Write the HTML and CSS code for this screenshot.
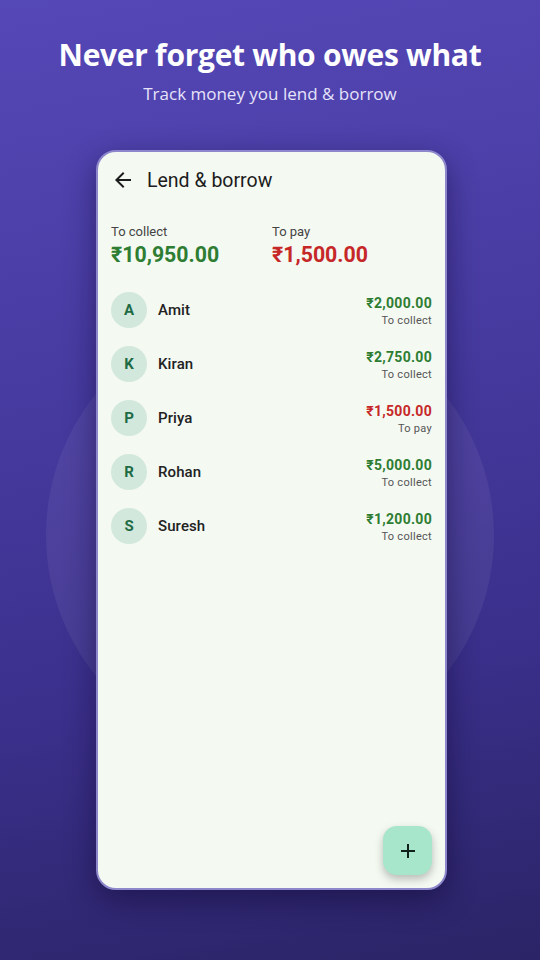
FILE: index.html
```html
<!DOCTYPE html>
<html>
<head>
<meta charset="utf-8">
<link rel="stylesheet" href="styles.css">
</head>
<body>
<div class="screen">
  <div class="glow"></div>
  <header class="hero">
    <h1 class="hero-title">Never forget who owes what</h1>
    <p class="hero-sub">Track money you lend &amp; borrow</p>
  </header>
  <div class="phone">
    <div class="topbar">
      <svg class="back" width="24" height="24" viewBox="0 0 24 24"><path d="M20 11H7.83l5.59-5.59L12 4l-8 8 8 8 1.41-1.41L7.83 13H20v-2z" fill="#1c1c1c"/></svg>
      <span class="topbar-title">Lend &amp; borrow</span>
    </div>
    <div class="totals">
      <div class="total">
        <div class="total-label">To collect</div>
        <div class="total-amt green">₹10,950.00</div>
      </div>
      <div class="total">
        <div class="total-label">To pay</div>
        <div class="total-amt red">₹1,500.00</div>
      </div>
    </div>
    <div class="list">
      <div class="row">
        <div class="avatar">A</div><div class="name">Amit</div>
        <div class="amt"><div class="amt-val green">₹2,000.00</div><div class="amt-sub">To collect</div></div>
      </div>
      <div class="row">
        <div class="avatar">K</div><div class="name">Kiran</div>
        <div class="amt"><div class="amt-val green">₹2,750.00</div><div class="amt-sub">To collect</div></div>
      </div>
      <div class="row">
        <div class="avatar">P</div><div class="name">Priya</div>
        <div class="amt"><div class="amt-val red">₹1,500.00</div><div class="amt-sub">To pay</div></div>
      </div>
      <div class="row">
        <div class="avatar">R</div><div class="name">Rohan</div>
        <div class="amt"><div class="amt-val green">₹5,000.00</div><div class="amt-sub">To collect</div></div>
      </div>
      <div class="row">
        <div class="avatar">S</div><div class="name">Suresh</div>
        <div class="amt"><div class="amt-val green">₹1,200.00</div><div class="amt-sub">To collect</div></div>
      </div>
    </div>
    <div class="fab">
      <svg width="18" height="18" viewBox="0 0 18 18"><path d="M9 2v14M2 9h14" stroke="#10201a" stroke-width="2"/></svg>
    </div>
  </div>
</div>
</body>
</html>
```
FILE: styles.css
```css
html, body {
  margin: 0;
  padding: 0;
}
.screen {
  position: relative;
  width: 540px;
  height: 960px;
  overflow: hidden;
  background: linear-gradient(170deg, #5548b7 0%, #463a9f 40%, #3a2f8a 70%, #2b2466 100%);
  display: flex;
  flex-direction: column;
  align-items: center;
}
.glow {
  position: absolute;
  left: 46px;
  top: 311px;
  width: 448px;
  height: 448px;
  border-radius: 50%;
  background: rgba(255, 255, 255, 0.06);
}
.hero {
  position: relative;
  text-align: center;
  color: #fff;
  padding-top: 34px;
}
.hero-title {
  margin: 0;
  font-family: "Open Sans", sans-serif;
  font-weight: 700;
  font-size: 30px;
  line-height: 42px;
  letter-spacing: -0.3px;
}
.hero-sub {
  margin: 6px 0 0 0;
  font-family: "Open Sans", sans-serif;
  font-weight: 400;
  font-size: 17px;
  line-height: 24px;
  color: #e6e3fa;
}
.phone {
  position: relative;
  margin-top: 44px;
  margin-left: 3px;
  width: 347px;
  height: 736px;
  border: 2px solid #8d88cc;
  border-radius: 20px;
  background: #f4f9f2;
  box-shadow: 0 10px 30px rgba(10, 5, 40, 0.45);
  font-family: Roboto, sans-serif;
  color: #1c1c1c;
  box-sizing: content-box;
}
.topbar {
  display: flex;
  align-items: center;
  height: 56px;
  padding-left: 13px;
}
.back {
  display: block;
}
.topbar-title {
  margin-left: 12px;
  font-size: 19.5px;
  color: #1c1c1c;
}
.totals {
  display: flex;
  padding: 16px 0 0 13px;
}
.total {
  width: 161px;
}
.total-label {
  font-size: 13px;
  line-height: 16px;
  color: #444;
}
.total-amt {
  font-size: 21.3px;
  font-weight: 700;
  line-height: 26px;
  margin-top: 2px;
}
.green { color: #2e7d32; }
.red { color: #c62828; }
.list {
  display: flex;
  flex-direction: column;
  padding: 24px 13px 0 13px;
  gap: 18px;
}
.row {
  display: flex;
  align-items: center;
  height: 36px;
}
.avatar {
  width: 36px;
  height: 36px;
  border-radius: 50%;
  background: #d3e8dc;
  color: #1f6b45;
  font-weight: 700;
  font-size: 15px;
  display: flex;
  align-items: center;
  justify-content: center;
}
.name {
  flex: 1;
  margin-left: 11px;
  font-size: 15px;
  font-weight: 500;
  letter-spacing: 0.1px;
  color: #222;
}
.amt {
  text-align: right;
  padding-top: 2px;
}
.amt-val {
  font-size: 14px;
  font-weight: 700;
  line-height: 18px;
  letter-spacing: 0.3px;
}
.amt-sub {
  margin-top: 2px;
  font-size: 11px;
  line-height: 14px;
  color: #555;
  letter-spacing: 0.3px;
}
.fab {
  position: absolute;
  right: 13px;
  bottom: 13px;
  width: 49px;
  height: 49px;
  border-radius: 14px;
  background: #a8e6cb;
  box-shadow: 0 4px 8px rgba(0, 0, 0, 0.25);
  display: flex;
  align-items: center;
  justify-content: center;
}
```
